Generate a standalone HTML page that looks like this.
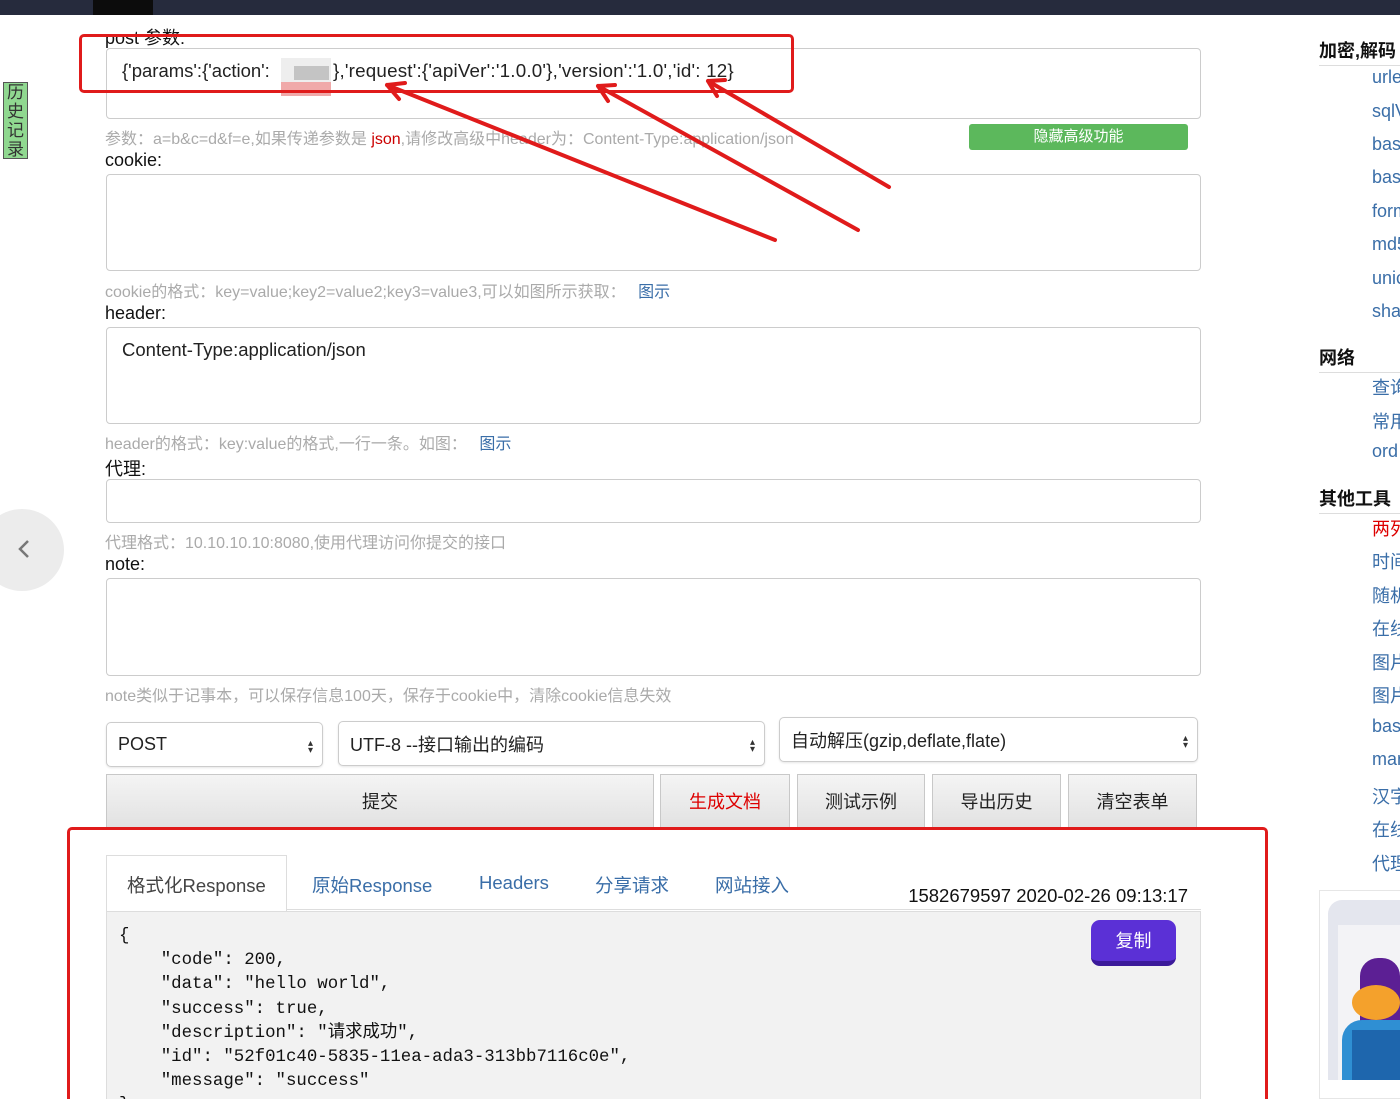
<!DOCTYPE html>
<html style="width:1400px;height:1099px;overflow:hidden"><head><meta charset="utf-8"><style>
*{margin:0;padding:0;box-sizing:border-box}
body{width:1400px;height:1099px;overflow:hidden;background:#fff;position:relative;font-family:"Liberation Sans","Noto Sans CJK SC",sans-serif;color:#222}
.a{position:absolute;white-space:nowrap}
.ta{position:absolute;left:106px;width:1095px;border:1px solid #ccc;border-radius:4px;background:#fff}
.lbl{position:absolute;left:105px;font-size:18px;color:#111}
.hint{position:absolute;left:105px;font-size:16px;color:#aaa;white-space:nowrap}
.sel{position:absolute;border:1px solid #ccc;border-radius:5px;background:#fff;font-size:18px;padding-left:11px;display:flex;align-items:center;box-shadow:0 1px 2px rgba(0,0,0,.1)}
.sel:after{content:"▴▾";position:absolute;right:6px;top:50%;transform:translateY(-50%);font-size:10px;writing-mode:vertical-lr;letter-spacing:-4px;color:#333}
.btn{position:absolute;top:774px;height:54px;border:1px solid #c8c8c8;background:linear-gradient(#f4f4f4,#e2e2e2);font-size:18px;display:flex;align-items:center;justify-content:center}
.side a{position:absolute;left:1372px;font-size:18px;color:#3a6ea8;text-decoration:none;white-space:nowrap}
.sh{position:absolute;left:1319px;width:81px;font-size:18px;font-weight:bold;color:#111;border-bottom:1px solid #ddd;padding-bottom:2px;white-space:nowrap;overflow:hidden}
.code{position:absolute;font-family:"Liberation Mono","Noto Sans CJK SC",monospace;font-size:17.4px;color:#111;white-space:pre;line-height:24.2px}
.tab{position:absolute;top:872px;font-size:18.5px;color:#3a6ea8;white-space:nowrap}
</style></head><body>
<div class="a" style="left:0;top:0;width:1400px;height:15px;background:#262b3d"></div>
<div class="a" style="left:93px;top:0;width:60px;height:15px;background:#0c0c0c"></div>

<div class="a" style="left:3px;top:82px;width:25px;height:77px;background:#90d890;border:1px solid #555;font-size:17px;line-height:19px;text-align:center;white-space:normal;color:#333">历史记录</div>
<div class="a" style="left:-20px;top:509px;width:84px;height:82px;border-radius:50%;background:#ececec"></div>
<svg class="a" style="left:15px;top:538px" width="18" height="24"><path d="M13 3 L5 11 L13 19" stroke="#777" stroke-width="2.5" fill="none"/></svg>

<div class="lbl" style="top:24px">post 参数:</div>
<div class="ta" style="top:48px;height:71px"></div>
<div class="a" style="left:122px;top:60px;font-size:18.5px">{'params':{'action':</div>
<div class="a" style="left:333px;top:60px;font-size:18.8px;letter-spacing:0.2px">},'request':{'apiVer':'1.0.0'},'version':'1.0','id': 12}</div>
<div class="a" style="left:281px;top:58px;width:50px;height:24px;background:#eee"></div>
<div class="a" style="left:294px;top:66px;width:35px;height:14px;background:#c4c4c4"></div>
<div class="a" style="left:281px;top:82px;width:50px;height:14px;background:#f0a9a9"></div>
<div class="hint" style="top:125px">参数：a=b&amp;c=d&amp;f=e,如果传递参数是 <span style="color:#c00">json</span>,请修改高级中header为：Content-Type:application/json</div>
<div class="a" style="left:969px;top:124px;width:219px;height:26px;background:#5cb85c;border-radius:3px;color:#fff;font-size:15px;text-align:center;line-height:26px">隐藏高级功能</div>

<div class="lbl" style="top:150px">cookie:</div>
<div class="ta" style="top:174px;height:97px"></div>
<div class="hint" style="top:278px">cookie的格式：key=value;key2=value2;key3=value3,可以如图所示获取： <span style="color:#3a6ea8;margin-left:8px">图示</span></div>

<div class="lbl" style="top:303px">header:</div>
<div class="ta" style="top:327px;height:97px"></div>
<div class="a" style="left:122px;top:339px;font-size:18.5px">Content-Type:application/json</div>
<div class="hint" style="top:430px">header的格式：key:value的格式,一行一条。如图： <span style="color:#3a6ea8;margin-left:8px">图示</span></div>

<div class="lbl" style="top:455px">代理:</div>
<div class="ta" style="top:479px;height:44px"></div>
<div class="hint" style="top:529px">代理格式：10.10.10.10:8080,使用代理访问你提交的接口</div>

<div class="lbl" style="top:554px">note:</div>
<div class="ta" style="top:578px;height:98px"></div>
<div class="hint" style="top:682px">note类似于记事本，可以保存信息100天，保存于cookie中，清除cookie信息失效</div>

<div class="sel" style="left:106px;top:722px;width:217px;height:45px">POST</div>
<div class="sel" style="left:338px;top:721px;width:427px;height:45px">UTF-8 --接口输出的编码</div>
<div class="sel" style="left:779px;top:717px;width:419px;height:45px">自动解压(gzip,deflate,flate)</div>

<div class="btn" style="left:106px;width:548px">提交</div>
<div class="btn" style="left:660px;width:130px;color:#d00">生成文档</div>
<div class="btn" style="left:797px;width:128px">测试示例</div>
<div class="btn" style="left:932px;width:129px">导出历史</div>
<div class="btn" style="left:1068px;width:129px">清空表单</div>

<div class="a" style="left:106px;top:909px;width:1095px;height:1px;background:#ddd"></div>
<div class="a" style="left:106px;top:855px;width:181px;height:56px;border:1px solid #ddd;border-bottom:none;background:#fff;font-size:18.5px;color:#444;padding:16px 0 0 20px">格式化Response</div>
<div class="tab" style="left:312px">原始Response</div>
<div class="tab" style="left:479px">Headers</div>
<div class="tab" style="left:595px">分享请求</div>
<div class="tab" style="left:715px">网站接入</div>
<div class="a" style="right:212px;top:885px;font-size:18.5px;color:#111">1582679597 2020-02-26 09:13:17</div>
<div class="a" style="left:106px;top:911px;width:1095px;height:200px;background:#f2f2f2;border:1px solid #ddd"></div>
<div class="code" style="left:119px;top:925px">{
    "code": 200,
    "data": "hello world",
    "success": true,
    "description": "请求成功",
    "id": "52f01c40-5835-11ea-ada3-313bb7116c0e",
    "message": "success"
}</div>
<div class="a" style="left:1091px;top:920px;width:85px;height:46px;background:#5b30d6;border-radius:9px;border-bottom:5px solid #3b1a9a;color:#fff;font-size:18px;text-align:center;line-height:42px">复制</div>

<div class="sh" style="top:37px">加密,解码</div>
<div class="side">
<a style="top:67px">urlencode</a><a style="top:101px">sqlVerify</a><a style="top:134px">base64</a><a style="top:167px">base32</a><a style="top:201px">format</a><a style="top:234px">md5</a><a style="top:268px">unicode</a><a style="top:301px">sha</a>
<a style="top:374px">查询</a><a style="top:408px">常用</a><a style="top:441px">ord</a>
<a style="top:515px;color:#d00">两列</a><a style="top:548px">时间</a><a style="top:582px">随机</a><a style="top:615px">在线</a><a style="top:649px">图片</a><a style="top:682px">图片</a><a style="top:716px">base</a><a style="top:749px">man</a><a style="top:783px">汉字</a><a style="top:816px">在线</a><a style="top:850px">代理</a>
</div>
<div class="sh" style="top:344px">网络</div>
<div class="sh" style="top:485px">其他工具</div>

<div class="a" style="left:1319px;top:890px;width:81px;height:209px;border:1px solid #e6e6e6;border-right:none;background:#fff"></div>
<div class="a" style="left:1328px;top:900px;width:80px;height:180px;border-radius:14px 0 0 0;background:#e4e6ee"></div>
<div class="a" style="left:1338px;top:925px;width:70px;height:155px;background:#f3f3f6"></div>
<div class="a" style="left:1360px;top:958px;width:40px;height:70px;border-radius:18px 18px 0 0;background:#5c1f94"></div>
<div class="a" style="left:1352px;top:985px;width:48px;height:35px;border-radius:50%;background:#f4a12c"></div>
<div class="a" style="left:1342px;top:1020px;width:60px;height:60px;border-radius:20px 0 0 0;background:#2f8fd3"></div>
<div class="a" style="left:1352px;top:1030px;width:50px;height:50px;background:#1e66ad"></div>

<div class="a" style="left:79px;top:34px;width:715px;height:59px;border:3px solid #e01b1b;border-radius:5px"></div>
<div class="a" style="left:67px;top:827px;width:1201px;height:272px;border:3px solid #e01b1b;border-bottom:none;border-radius:5px 5px 0 0"></div>
<svg class="a" style="left:0;top:0" width="1400" height="300">
<g stroke="#e01b1b" stroke-width="4" fill="none" stroke-linecap="round">
<path d="M775 240 L387 85 M387 85 L405 83 M387 85 L399 99"/>
<path d="M858 230 L598 86 M598 86 L615 85 M598 86 L608 101"/>
<path d="M889 187 L708 81 M708 81 L725 80 M708 81 L717 96"/>
</g></svg>
</body></html>
